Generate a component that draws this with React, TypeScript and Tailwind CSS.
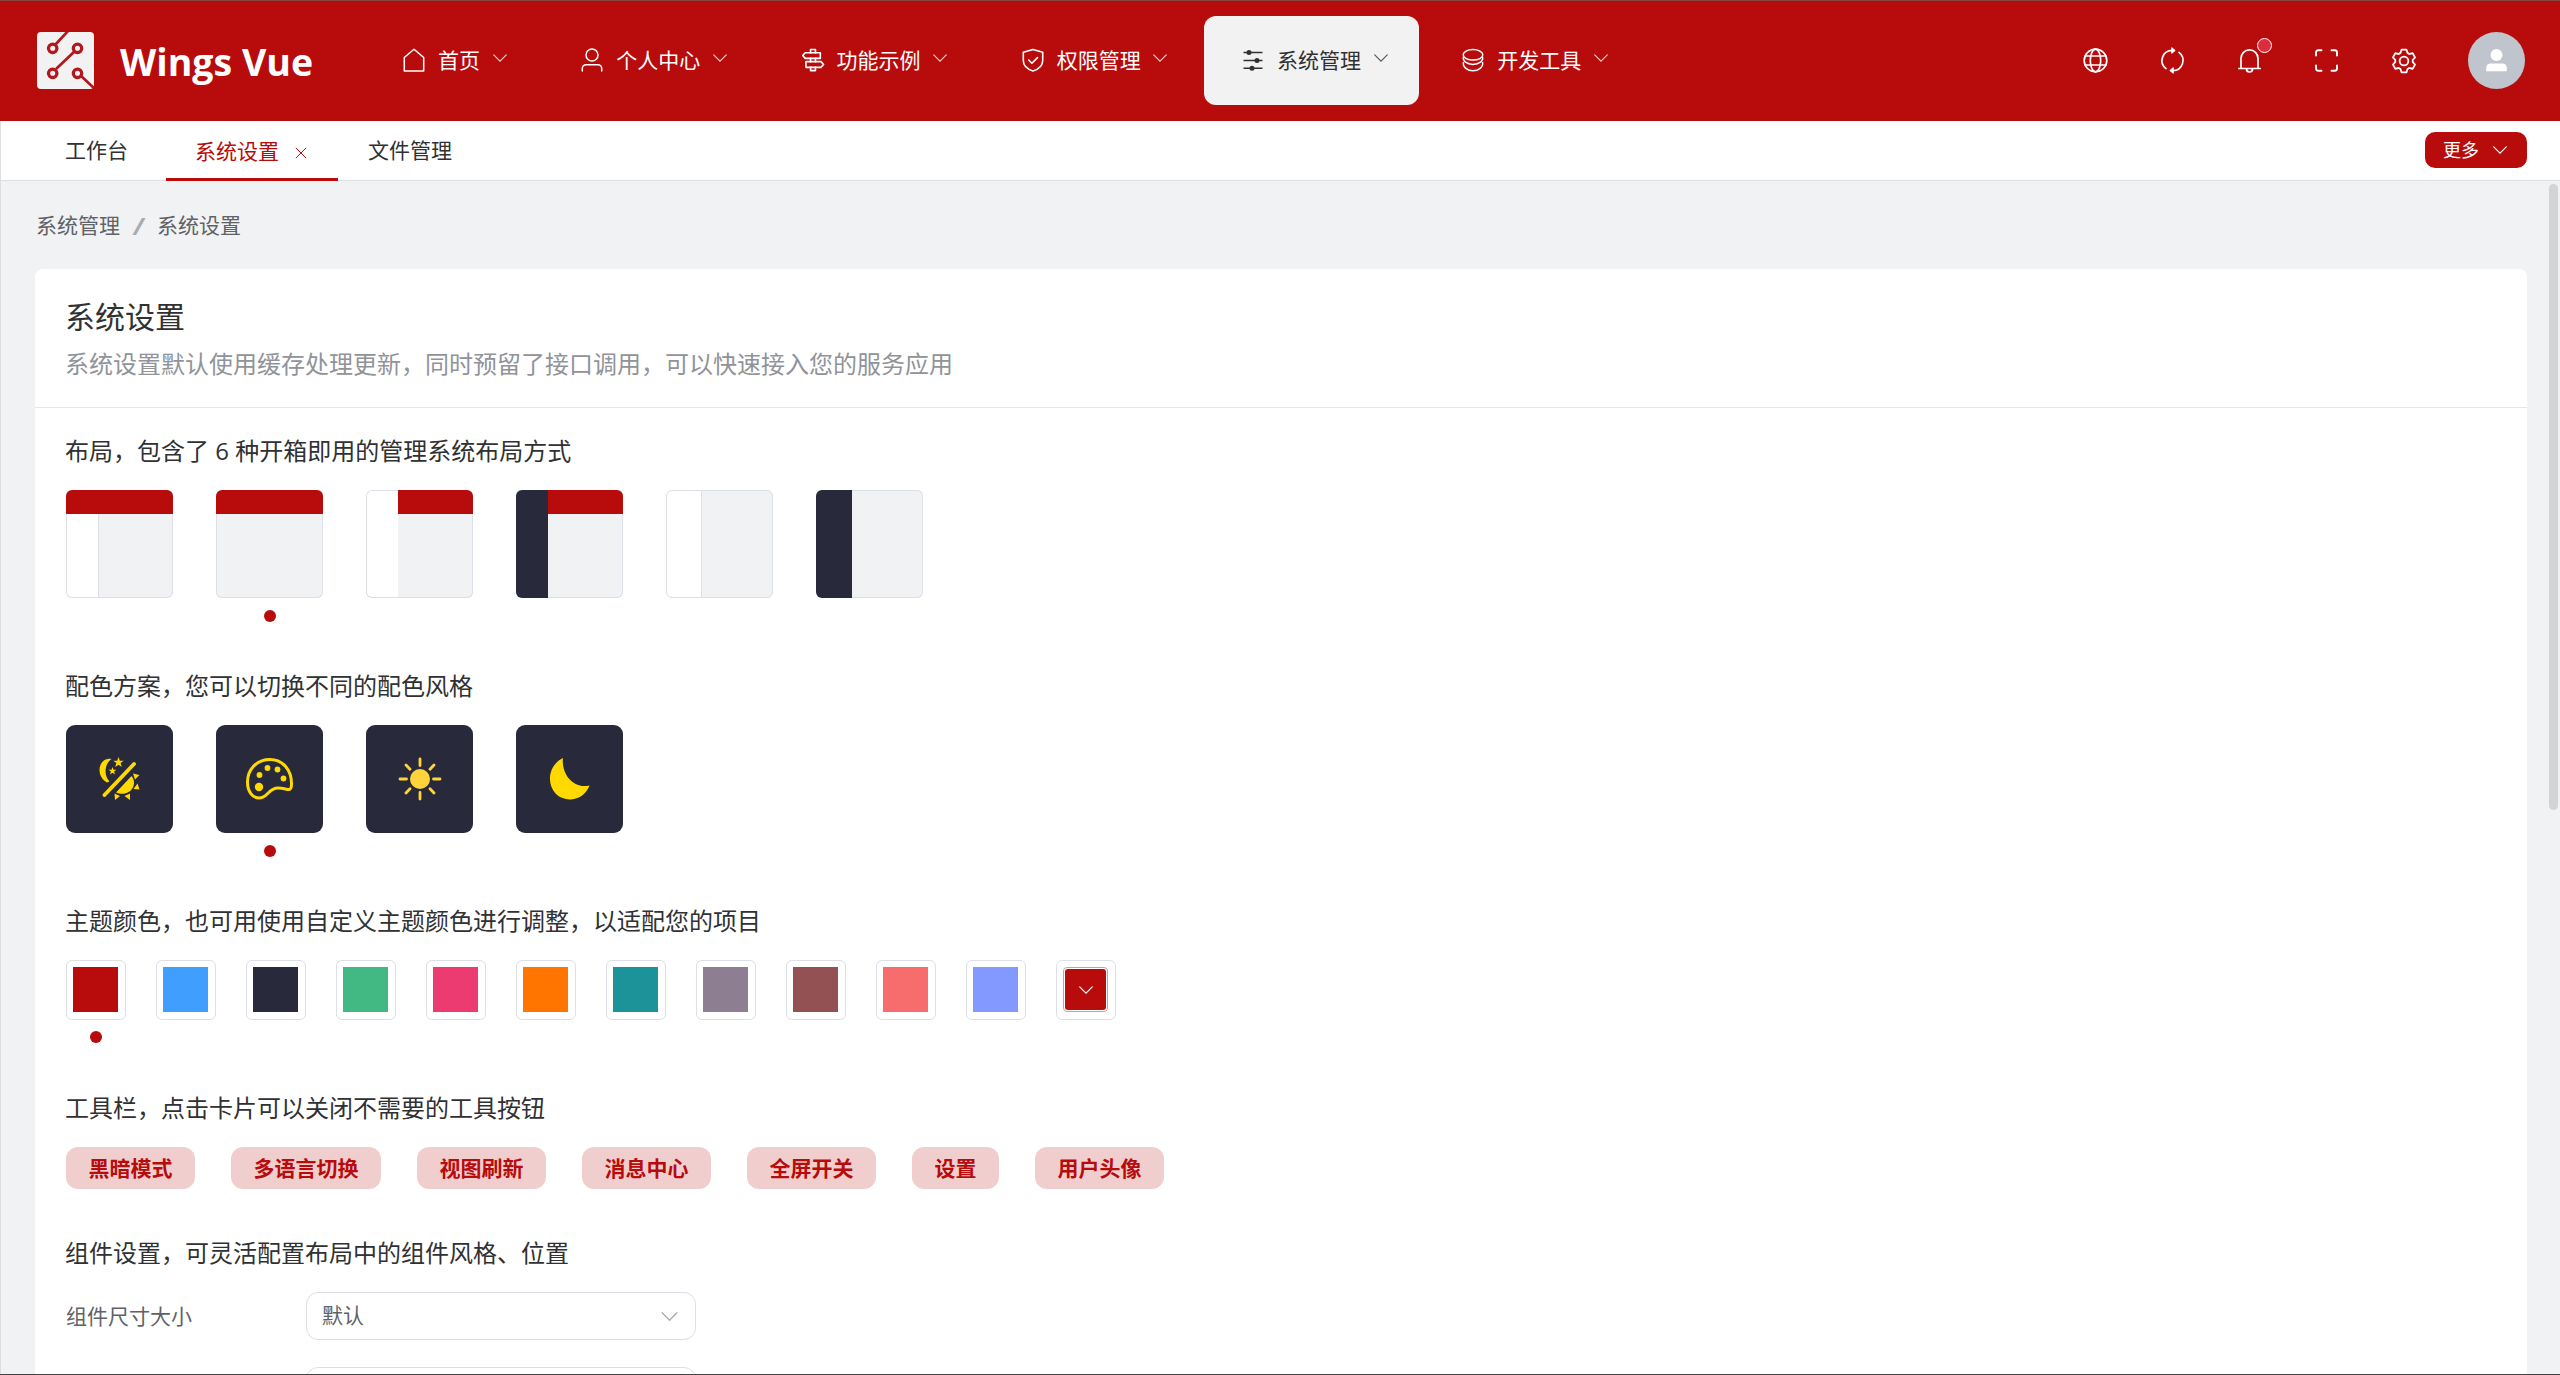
import React from "react";

const FONT = "font-['Open_Sans','Noto_Sans_CJK_SC',sans-serif]";

type P = { className?: string; children: React.ReactNode; box?: string };
const Ico = ({ className = "", children, box = "0 0 1024 1024" }: P) => (
  <svg viewBox={box} fill="currentColor" className={"shrink-0 " + className}>{children}</svg>
);

const Chevron = ({ className = "" }: { className?: string }) => (
  <Ico className={className} box="0 0 18 18">
    <path d="M2.7 5.8 9 12.2 15.3 5.8" fill="none" stroke="currentColor" strokeWidth="1.15" strokeLinecap="round" />
  </Ico>
);

const Home = () => (
  <Ico className="size-6" box="0 0 24 24">
    <path d="M2.3 23V9.500L12 1.2l9.7 8.300V23z" fill="none" stroke="currentColor" strokeWidth="1.5" strokeLinejoin="round" />
  </Ico>
);
const User = () => (
  <Ico className="size-6" box="0 0 24 24">
    <g fill="none" stroke="currentColor" strokeWidth="1.5" strokeLinecap="round">
      <circle cx="12" cy="7" r="6" />
      <path d="M2.3 23v-2.600a3.700 3.700 0 0 1 3.700-3.700h12a3.700 3.700 0 0 1 3.700 3.700V23" />
    </g>
  </Ico>
);
const Guide = () => (
  <Ico className="size-[26px] -mx-px">
    <path d="M640 608h-64V416h64v192zm0 160v160a32 32 0 0 1-32 32H416a32 32 0 0 1-32-32V768h64v128h128V768h64zM384 608V416h64v192h-64zm256-352h-64V128H448v128h-64V96a32 32 0 0 1 32-32h192a32 32 0 0 1 32 32v160z" />
    <path d="m220.800 256-71.232 80 71.168 80H768V256H220.800zm-14.400-64H800a32 32 0 0 1 32 32v224a32 32 0 0 1-32 32H206.400a32 32 0 0 1-23.936-10.752l-99.584-112a32 32 0 0 1 0-42.496l99.584-112A32 32 0 0 1 206.400 192zm678.784 496-71.104 80H266.816V608h547.200l71.168 80zm-56.768-144H234.880a32 32 0 0 0-32 32v224a32 32 0 0 0 32 32h593.600a32 32 0 0 0 23.936-10.752l99.584-112a32 32 0 0 0 0-42.496l-99.584-112A32 32 0 0 0 828.480 544z" />
  </Ico>
);
const Shield = () => (
  <Ico className="size-6" box="0 0 24 24">
    <g fill="none" stroke="currentColor" strokeWidth="1.6" strokeLinejoin="round" strokeLinecap="round">
      <path d="M12 1.400 21.700 4.300v8.200c0 4.800-3.700 8.600-9.700 10.500-6-1.900-9.700-5.700-9.700-10.500V4.300z" />
      <path d="m7.700 12 3.200 3.200 5.600-5.600" />
    </g>
  </Ico>
);
const Sliders = () => (
  <Ico className="size-6" box="0 0 24 24">
    <path d="M2.500 4.500h19M2.500 12.500h19M2.500 20.300h19" stroke="currentColor" strokeWidth="1.600" />
    <circle cx="8" cy="4.500" r="2.500" /><circle cx="16" cy="12.500" r="2.500" /><circle cx="11" cy="20.300" r="2.500" />
  </Ico>
);
const Coin = () => (
  <Ico className="size-6" box="0 0 24 24">
    <g fill="none" stroke="currentColor" strokeWidth="1.500">
      <ellipse cx="12" cy="6.800" rx="9.800" ry="5.300" />
      <path d="M2.600 8.500c-1.500 4.500 3.500 8 9.400 8s10.900-3.500 9.400-8" />
      <path d="M2.600 14c-1.500 4.500 3.500 8.800 9.400 8.800s10.900-4.300 9.400-8.800" />
    </g>
  </Ico>
);

const MENU = [
  { t: "首页", i: <Home /> },
  { t: "个人中心", i: <User /> },
  { t: "功能示例", i: <Guide /> },
  { t: "权限管理", i: <Shield /> },
  { t: "系统管理", i: <Sliders />, on: true },
  { t: "开发工具", i: <Coin /> },
];

const Logo = () => (
  <svg viewBox="0 0 57 57" className="size-[57px] shrink-0">
    <rect width="57" height="57" rx="4" fill="#f2f2f2" />
    <g fill="#f2f2f2" stroke="#b3161d" strokeWidth="2.700">
      <path d="M18 13 31-1M19 37 38 19M43 43 58 57" />
      <g strokeWidth="3.300">
        <circle cx="15.700" cy="16.300" r="4.200" /><circle cx="40.500" cy="16.300" r="4.200" />
        <circle cx="15.700" cy="41.300" r="4.200" /><circle cx="40.500" cy="41.300" r="4.200" />
      </g>
    </g>
  </svg>
);

const Gear = () => (
  <Ico className="size-[28px]">
    <path d="M600.704 64a32 32 0 0 1 30.464 22.208l35.200 109.376c14.784 7.232 28.928 15.360 42.432 24.512l112.384-24.192a32 32 0 0 1 34.432 15.360L944.320 364.800a32 32 0 0 1-4.032 37.504l-77.120 85.120a357.120 357.120 0 0 1 0 49.024l77.120 85.248a32 32 0 0 1 4.032 37.504l-88.704 153.600a32 32 0 0 1-34.432 15.296L708.800 803.904c-13.440 9.088-27.648 17.280-42.368 24.512l-35.264 109.376A32 32 0 0 1 600.704 960H423.296a32 32 0 0 1-30.464-22.208L357.696 828.480a351.616 351.616 0 0 1-42.560-24.640l-112.320 24.256a32 32 0 0 1-34.432-15.360L79.680 659.200a32 32 0 0 1 4.032-37.504l77.120-85.248a357.120 357.120 0 0 1 0-48.896l-77.120-85.248A32 32 0 0 1 79.680 364.800l88.704-153.600a32 32 0 0 1 34.432-15.296l112.320 24.256c13.568-9.152 27.776-17.408 42.560-24.640l35.200-109.312A32 32 0 0 1 423.232 64H600.640zm-23.424 64H446.720l-36.352 113.088-24.512 11.968a294.113 294.113 0 0 0-34.816 20.096l-22.656 15.360-116.224-25.088-65.280 113.152 79.680 88.192-1.920 27.136a293.120 293.120 0 0 0 0 40.192l1.920 27.136-79.808 88.192 65.344 113.152 116.224-25.024 22.656 15.296a294.113 294.113 0 0 0 34.816 20.096l24.512 11.968L446.720 896h130.688l36.480-113.152 24.448-11.904a288.282 288.282 0 0 0 34.752-20.096l22.592-15.296 116.288 25.024 65.280-113.152-79.744-88.192 1.920-27.136a293.120 293.120 0 0 0 0-40.256l-1.920-27.136 79.808-88.128-65.344-113.152-116.288 24.960-22.592-15.232a287.616 287.616 0 0 0-34.752-20.096l-24.448-11.904L577.344 128zM512 320a192 192 0 1 1 0 384 192 192 0 0 1 0-384zm0 64a128 128 0 1 0 0 256 128 128 0 0 0 0-256z" />
  </Ico>
);

const Line = ({ children }: { children: React.ReactNode }) => (
  <svg viewBox="0 0 27 27" className="size-[27px]" fill="none" stroke="currentColor" strokeWidth="1.700" strokeLinecap="round" strokeLinejoin="round">{children}</svg>
);

const TOOLS = [
  <Line><circle cx="13.500" cy="13.500" r="11.300" /><ellipse cx="13.500" cy="13.500" rx="5.200" ry="11.300" /><path d="M3 9h21M3 18h21" /></Line>,
  <Line><path d="M7 21.600A10.200 10.200 0 0 1 13.200 3.300M20 5.400A10.200 10.200 0 0 1 13.800 23.700" /><path d="m13 .900 3.200 2.600-3.200 2.600zM14 20.900l-3.200 2.600 3.200 2.600z" fill="currentColor" strokeWidth="1" /></Line>,
  <Line><path d="M2.800 21.500h21.400M5 21.500V11.300a8.500 8.500 0 0 1 17 0v10.200M10.500 22a3 3 0 0 0 6 0" /></Line>,
  <Line><path d="M3 8.500V5.500a2.200 2.200 0 0 1 2.200-2.200H8.500M18.500 3.300h3.300A2.200 2.200 0 0 1 24 5.500v3M24 18.500v3a2.200 2.200 0 0 1-2.200 2.200h-3.300M8.500 23.700H5.200A2.200 2.200 0 0 1 3 21.500v-3" strokeWidth="1.900" /></Line>,
  <Gear />,
];

const Header = () => (
  <header className="flex h-[121px] items-center border-t border-[#8b4341] bg-[#b80b0c] pr-[35px] pb-[2px] pl-[37px] text-white">
    <Logo />
    <h1 className="ml-[26px] w-[245px] whitespace-nowrap pt-[3px] text-[37.500px] leading-none font-bold">Wings Vue</h1>
    <nav className="flex gap-[5px]">
      {MENU.map((m) => (
        <a key={m.t} className={"flex h-[89px] items-center rounded-xl pl-[37px] pr-[29.750px] text-[21px] " + (m.on ? "bg-[#f2f2f2] text-[#303133]" : "")}>
          {m.i}
          <span className="ml-3 whitespace-nowrap pt-[2px]">{m.t}</span>
          <Chevron className="mt-[-4px] ml-[10.500px] size-[18px] opacity-80" />
        </a>
      ))}
    </nav>
    <div className="ml-auto flex items-center gap-[50px]">
      {TOOLS.map((t, i) => (
        <div key={i} className="relative right-px size-[27px]">
          {t}
          {i === 2 && <i className="absolute -top-[9px] left-[21px] size-[15px] rounded-full border border-white bg-[#dc2c3e]" />}
        </div>
      ))}
      <div className="flex size-[57px] items-center justify-center rounded-full bg-[#c0c4cc]">
        <Ico className="size-[27px]" box="0 0 27 27">
          <circle cx="13.500" cy="8" r="6" />
          <path d="M3.200 24.300V20.500a4.500 4.500 0 0 1 4.500-4h11.600a4.500 4.500 0 0 1 4.500 4v3.800z" />
        </Ico>
      </div>
    </div>
  </header>
);

const Tabs = () => (
  <div className="flex h-[60px] shrink-0 items-center border-b border-[#dcdfe1] bg-white pl-[34px] text-[21px] text-[#303133]">
    <span className="w-[131px] pt-px pl-[30px]">工作台</span>
    <span className="flex h-[60px] w-[172px] items-center self-start border-b-[3px] border-[#b80b0c] pt-[4px] pl-[29px] text-[#b80b0c]">
      系统设置
      <svg viewBox="0 0 12 12" className="mt-[2px] ml-[16px] size-3 stroke-current"><path d="m.8.800 10.400 10.400M11.200.800.800 11.200" /></svg>
    </span>
    <span className="pt-px pl-[30px]">文件管理</span>
    <button className="mr-[33px] mb-[2px] ml-auto flex h-9 w-[102px] items-center rounded-[10px] bg-[#b80b0c] pl-[18px] text-lg text-white">
      更多<Chevron className="ml-3 size-[18px]" />
    </button>
  </div>
);

const Dot = () => <i className="absolute -bottom-6 left-1/2 size-3 -translate-x-1/2 rounded-full bg-[#b80b0c]" />;

const LAYOUTS = [
  { top: "bg-[#b80b0c]", side: "w-[33px] bg-white border-r border-[#dcdfe6]", full: false, edge: "top-6 rounded-b-md border border-t-0" },
  { top: "bg-[#b80b0c]", side: "w-0", full: false, edge: "top-6 rounded-b-md border border-t-0" },
  { top: "bg-[#b80b0c]", side: "w-8 rounded-tl-md border-t border-l border-[#dcdfe6] bg-white", full: true, edge: "top-6 rounded-b-md border border-t-0" },
  { top: "bg-[#b80b0c]", side: "w-8 bg-[#282a3c]", full: true, edge: "top-6 left-8 rounded-br-md border-r border-b" },
  { top: "", side: "w-9 bg-white border-r border-[#dcdfe6]", full: true, edge: "top-0 rounded-md border" },
  { top: "", side: "w-9 bg-[#282a3c]", full: true, edge: "top-0 left-9 rounded-r-md border border-l-0" },
];

const Thumb = ({ l, on }: { l: (typeof LAYOUTS)[number]; on: boolean }) => {
  const bar = l.top ? <div className={"h-6 shrink-0 " + l.top} /> : null;
  return (
    <div className="relative h-[108px] w-[107px]">
      <div className="flex size-full flex-col overflow-hidden rounded-md bg-[#f1f2f4]">
        {!l.full && bar}
        <div className="flex grow">
          <div className={l.side} />
          <div className="flex grow flex-col">{l.full && bar}</div>
        </div>
      </div>
      <div className={"absolute inset-x-0 bottom-0 border-[#dcdfe6] " + l.edge} />
      {on && <Dot />}
    </div>
  );
};

const Auto = () => (
  <Ico className="size-12" box="0 0 48 48">
    <path d="M15.500 4C3.500 1 -2 20 11 27.500L13.500 26.500C7.500 20 8.500 9 15.500 4Z" />
    <path d="m22.500 2 1.300 3.700h3.900l-3.100 2.400 1.200 3.900-3.300-2.300-3.300 2.300 1.200-3.900-3.100-2.400h3.900zM16.500 12l1 2.800h2.900l-2.300 1.800.900 2.800-2.500-1.700-2.500 1.700.900-2.800-2.300-1.800h2.900z" />
    <path d="M8.500 40 38 9" stroke="currentColor" strokeWidth="3.800" strokeLinecap="round" />
    <path d="M20 37.500 35.500 21C43 30 33 43 20 37.500ZM37 18.500l6.500 1.500-4.500 4.500zM41.500 28.500l2 6-6-.500zM34 38.500v6.500l-5.500-4zM18.500 38.500l5.500 2.500-5 4z" />
  </Ico>
);
const Palette = () => (
  <Ico className="size-12" box="0 0 48 48">
    <path d="M24 4.500C10 4.500 1.500 15 1.500 27c0 9 4.500 16 11.500 16 9 0 9-10 19-10 6 0 8 1.500 11 1.500 2 0 2.500-2.500 2.500-6C45.500 15 37 4.500 24 4.500Z" fill="none" stroke="currentColor" strokeWidth="3" />
    <circle cx="13" cy="32" r="4.200" /><circle cx="13.500" cy="20" r="2.900" /><circle cx="21.500" cy="13" r="2.900" /><circle cx="31.500" cy="14.500" r="2.900" /><circle cx="37.500" cy="23.500" r="2.900" />
  </Ico>
);
const Sun = () => (
  <Ico className="size-12 text-[#ffd43b]" box="0 0 48 48">
    <circle cx="24" cy="24" r="10" />
    <path d="M24 4v6.500M24 37.500V44M4 24h6.500M37.500 24H44M10 10l4 4.200M34 33.800l4 4.200M38 10l-4 4.200M14 33.800 10 38" stroke="currentColor" strokeWidth="2.800" strokeLinecap="round" />
  </Ico>
);
const Moon = () => (
  <Ico className="size-12" box="0 0 48 48">
    <path d="M17 3C15 17 26 34.500 43.500 30.500C38 45.500 20 48.500 10 39C-1 27 4 9 17 3Z" />
  </Ico>
);

const COLORS = ["#b80b0c", "#409eff", "#282a3c", "#42b883", "#eb3b70", "#ff7500", "#1c9399", "#8d7e91", "#945154", "#f76c6c", "#8499ff"];
const TAGS = ["黑暗模式", "多语言切换", "视图刷新", "消息中心", "全屏开关", "设置", "用户头像"];

const H2 = ({ children }: { children: React.ReactNode }) => <h2 className="h-9 text-2xl leading-9">{children}</h2>;

const SelectBox = ({ children }: { children?: React.ReactNode }) => (
  <div className="flex h-12 w-[390px] items-center justify-between rounded-xl border-[1.500px] border-[#dcdfe6] px-[15px] text-[21px] text-[#606266]">{children}</div>
);

export default function App() {
  return (
    <div className={"relative flex h-[1375px] w-[2560px] flex-col overflow-hidden border-b border-[#434343] bg-[#f1f2f4] text-[#303133] " + FONT}>
      <Header />
      <div className="flex h-[1253px] flex-col border-l border-[#dcdfe1]">
        <Tabs />
        <div className="mt-px flex h-[86px] shrink-0 items-center pt-[2px] pl-[35px] text-[21px] text-[#606266]">
          <span>系统管理</span>
          <span className="mx-[13.500px] text-[24px] font-bold text-[#a8abb2] italic">/</span>
          <span>系统设置</span>
        </div>
        <main className="mt-px ml-[34px] h-[1200px] w-[2492px] shrink-0 rounded-lg bg-white">
          <div className="h-[139px] border-b border-[#e4e7ed] pt-[25px] pl-[30px]">
            <div className="text-[30px] leading-[45px]">系统设置</div>
            <p className="mt-[7px] text-2xl leading-9 text-[#909399]">系统设置默认使用缓存处理更新，同时预留了接口调用，可以快速接入您的服务应用</p>
          </div>
          <div className="pt-[25px] pl-[30px]">
            <section className="h-[235px]">
              <H2>布局，包含了 6 种开箱即用的管理系统布局方式</H2>
              <div className="mt-[21px] ml-px flex gap-[43px]">
                {LAYOUTS.map((l, i) => <Thumb key={i} l={l} on={i === 1} />)}
              </div>
            </section>
            <section className="h-[235px]">
              <H2>配色方案，您可以切换不同的配色风格</H2>
              <div className="mt-[21px] ml-px flex gap-[43px]">
                {[<Auto />, <Palette />, <Sun />, <Moon />].map((c, i) => (
                  <div key={i} className="relative flex h-[108px] w-[107px] items-center justify-center rounded-[9px] bg-[#282a3c] text-[#ffd900]">
                    {c}
                    {i === 1 && <Dot />}
                  </div>
                ))}
              </div>
            </section>
            <section className="h-[187px]">
              <H2>主题颜色，也可用使用自定义主题颜色进行调整，以适配您的项目</H2>
              <div className="mt-[21px] ml-px flex gap-[30px]">
                {COLORS.map((c, i) => (
                  <div key={c} className="relative size-[60px] rounded-md border border-[#dcdfe6] p-[6px]">
                    <div className="size-[45px]" style={{ background: c }} />
                    {i === 0 && <Dot />}
                  </div>
                ))}
                <div className="size-[60px] rounded-md border border-[#dcdfe6] p-[6px]">
                  <div className="size-[45px] rounded border border-[#c9a0a0] p-px">
                    <div className="flex size-full items-center justify-center rounded-[3px] bg-[#b80b0c] text-white"><Chevron className="size-[18px]" /></div>
                  </div>
                </div>
              </div>
            </section>
            <section className="h-[145px]">
              <H2>工具栏，点击卡片可以关闭不需要的工具按钮</H2>
              <div className="mt-[21px] ml-px flex gap-9">
                {TAGS.map((t) => <span key={t} className="h-[42px] rounded-xl bg-[#f1cece] px-[22.500px] text-[21px] leading-[42px] font-bold text-[#b80b0c]">{t}</span>)}
              </div>
            </section>
            <section>
              <H2>组件设置，可灵活配置布局中的组件风格、位置</H2>
              <div className="mt-[21px] flex flex-col gap-[27px]">
                <div className="flex items-center text-[21px] text-[#606266]">
                  <span className="w-[241px] pt-px pl-px">组件尺寸大小</span>
                  <SelectBox>默认<Chevron className="size-[21px] text-[#a8abb2]" /></SelectBox>
                </div>
                <div className="flex items-center">
                  <span className="w-[241px]" />
                  <SelectBox />
                </div>
              </div>
            </section>
          </div>
        </main>
      </div>
      <div className="absolute top-[184px] right-[2px] h-[626px] w-[9px] rounded-full bg-[#d2d4d6]" />
    </div>
  );
}
